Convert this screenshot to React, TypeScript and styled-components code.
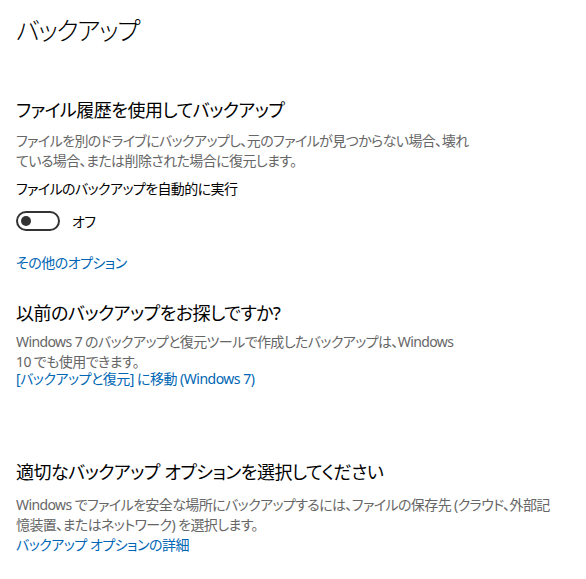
import React from "react";
import styled, { createGlobalStyle } from "styled-components";

const GlobalStyle = createGlobalStyle`
  html, body {
    margin: 0;
    padding: 0;
    background: #ffffff;
  }
  body {
    font-family: "Noto Sans", "Noto Sans CJK JP", sans-serif;
    font-feature-settings: "palt";
    -webkit-font-smoothing: antialiased;
  }
`;

const Page = styled.main`
  display: flex;
  flex-direction: column;
  align-items: flex-start;
  padding: 10px 16px 0 16px;
  width: 586px;
  box-sizing: border-box;
`;

const PageTitle = styled.h1`
  margin: 0;
  font-size: 25px;
  font-weight: 300;
  line-height: 40px;
  letter-spacing: -1.5px;
  color: #000;
`;

const Section = styled.section<{ $top: number }>`
  display: flex;
  flex-direction: column;
  align-items: flex-start;
  margin-top: ${(p) => p.$top}px;
`;

const Heading = styled.h2<{ $gap: number }>`
  margin: 0 0 ${(p) => p.$gap}px 0;
  font-size: 18px;
  font-weight: 400;
  line-height: 26px;
  letter-spacing: -0.5px;
  color: #000;
`;

const Body = styled.p<{ $width: number }>`
  margin: 0;
  max-width: ${(p) => p.$width}px;
  font-size: 14px;
  line-height: 19.5px;
  letter-spacing: -0.6px;
  color: #666;
`;

const Label = styled.div`
  margin-top: 9px;
  font-size: 14px;
  line-height: 20px;
  letter-spacing: -0.6px;
  color: #000;
`;

const ToggleRow = styled.div`
  display: flex;
  align-items: center;
  gap: 12px;
  margin-top: 12px;
  height: 20px;
  font-size: 14px;
  letter-spacing: -0.6px;
  color: #000;
`;

const Track = styled.span`
  position: relative;
  display: inline-block;
  width: 40px;
  height: 16px;
  border: 2px solid #333;
  border-radius: 10px;
`;

const Knob = styled.span`
  position: absolute;
  left: 3px;
  top: 3px;
  width: 10px;
  height: 10px;
  border-radius: 50%;
  background: #333;
`;

const Link = styled.a<{ $top: number }>`
  display: block;
  margin-top: ${(p) => p.$top}px;
  font-size: 14px;
  line-height: 18px;
  letter-spacing: -0.5px;
  color: #0066b4;
  text-decoration: none;
  cursor: pointer;
`;

export default function App() {
  return (
    <>
      <GlobalStyle />
      <Page>
        <PageTitle>バックアップ</PageTitle>
        <Section $top={47}>
          <Heading $gap={8}>ファイル履歴を使用してバックアップ</Heading>
          <Body $width={458}>
            ファイルを別のドライブにバックアップし、元のファイルが見つからない場合、壊れている場合、または削除された場合に復元します。
          </Body>
          <Label>ファイルのバックアップを自動的に実行</Label>
          <ToggleRow>
            <Track>
              <Knob />
            </Track>
            オフ
          </ToggleRow>
          <Link $top={23}>その他のオプション</Link>
        </Section>
        <Section $top={28}>
          <Heading $gap={6}>以前のバックアップをお探しですか?</Heading>
          <Body $width={452}>
            Windows 7 のバックアップと復元ツールで作成したバックアップは、Windows 10 でも使用できます。
          </Body>
          <Link $top={-1}>[バックアップと復元] に移動 (Windows 7)</Link>
        </Section>
        <Section $top={71}>
          <Heading $gap={10}>適切なバックアップ オプションを選択してください</Heading>
          <Body $width={540}>
            Windows でファイルを安全な場所にバックアップするには、ファイルの保存先 (クラウド、外部記憶装置、またはネットワーク) を選択します。
          </Body>
          <Link $top={2}>バックアップ オプションの詳細</Link>
        </Section>
      </Page>
    </>
  );
}
